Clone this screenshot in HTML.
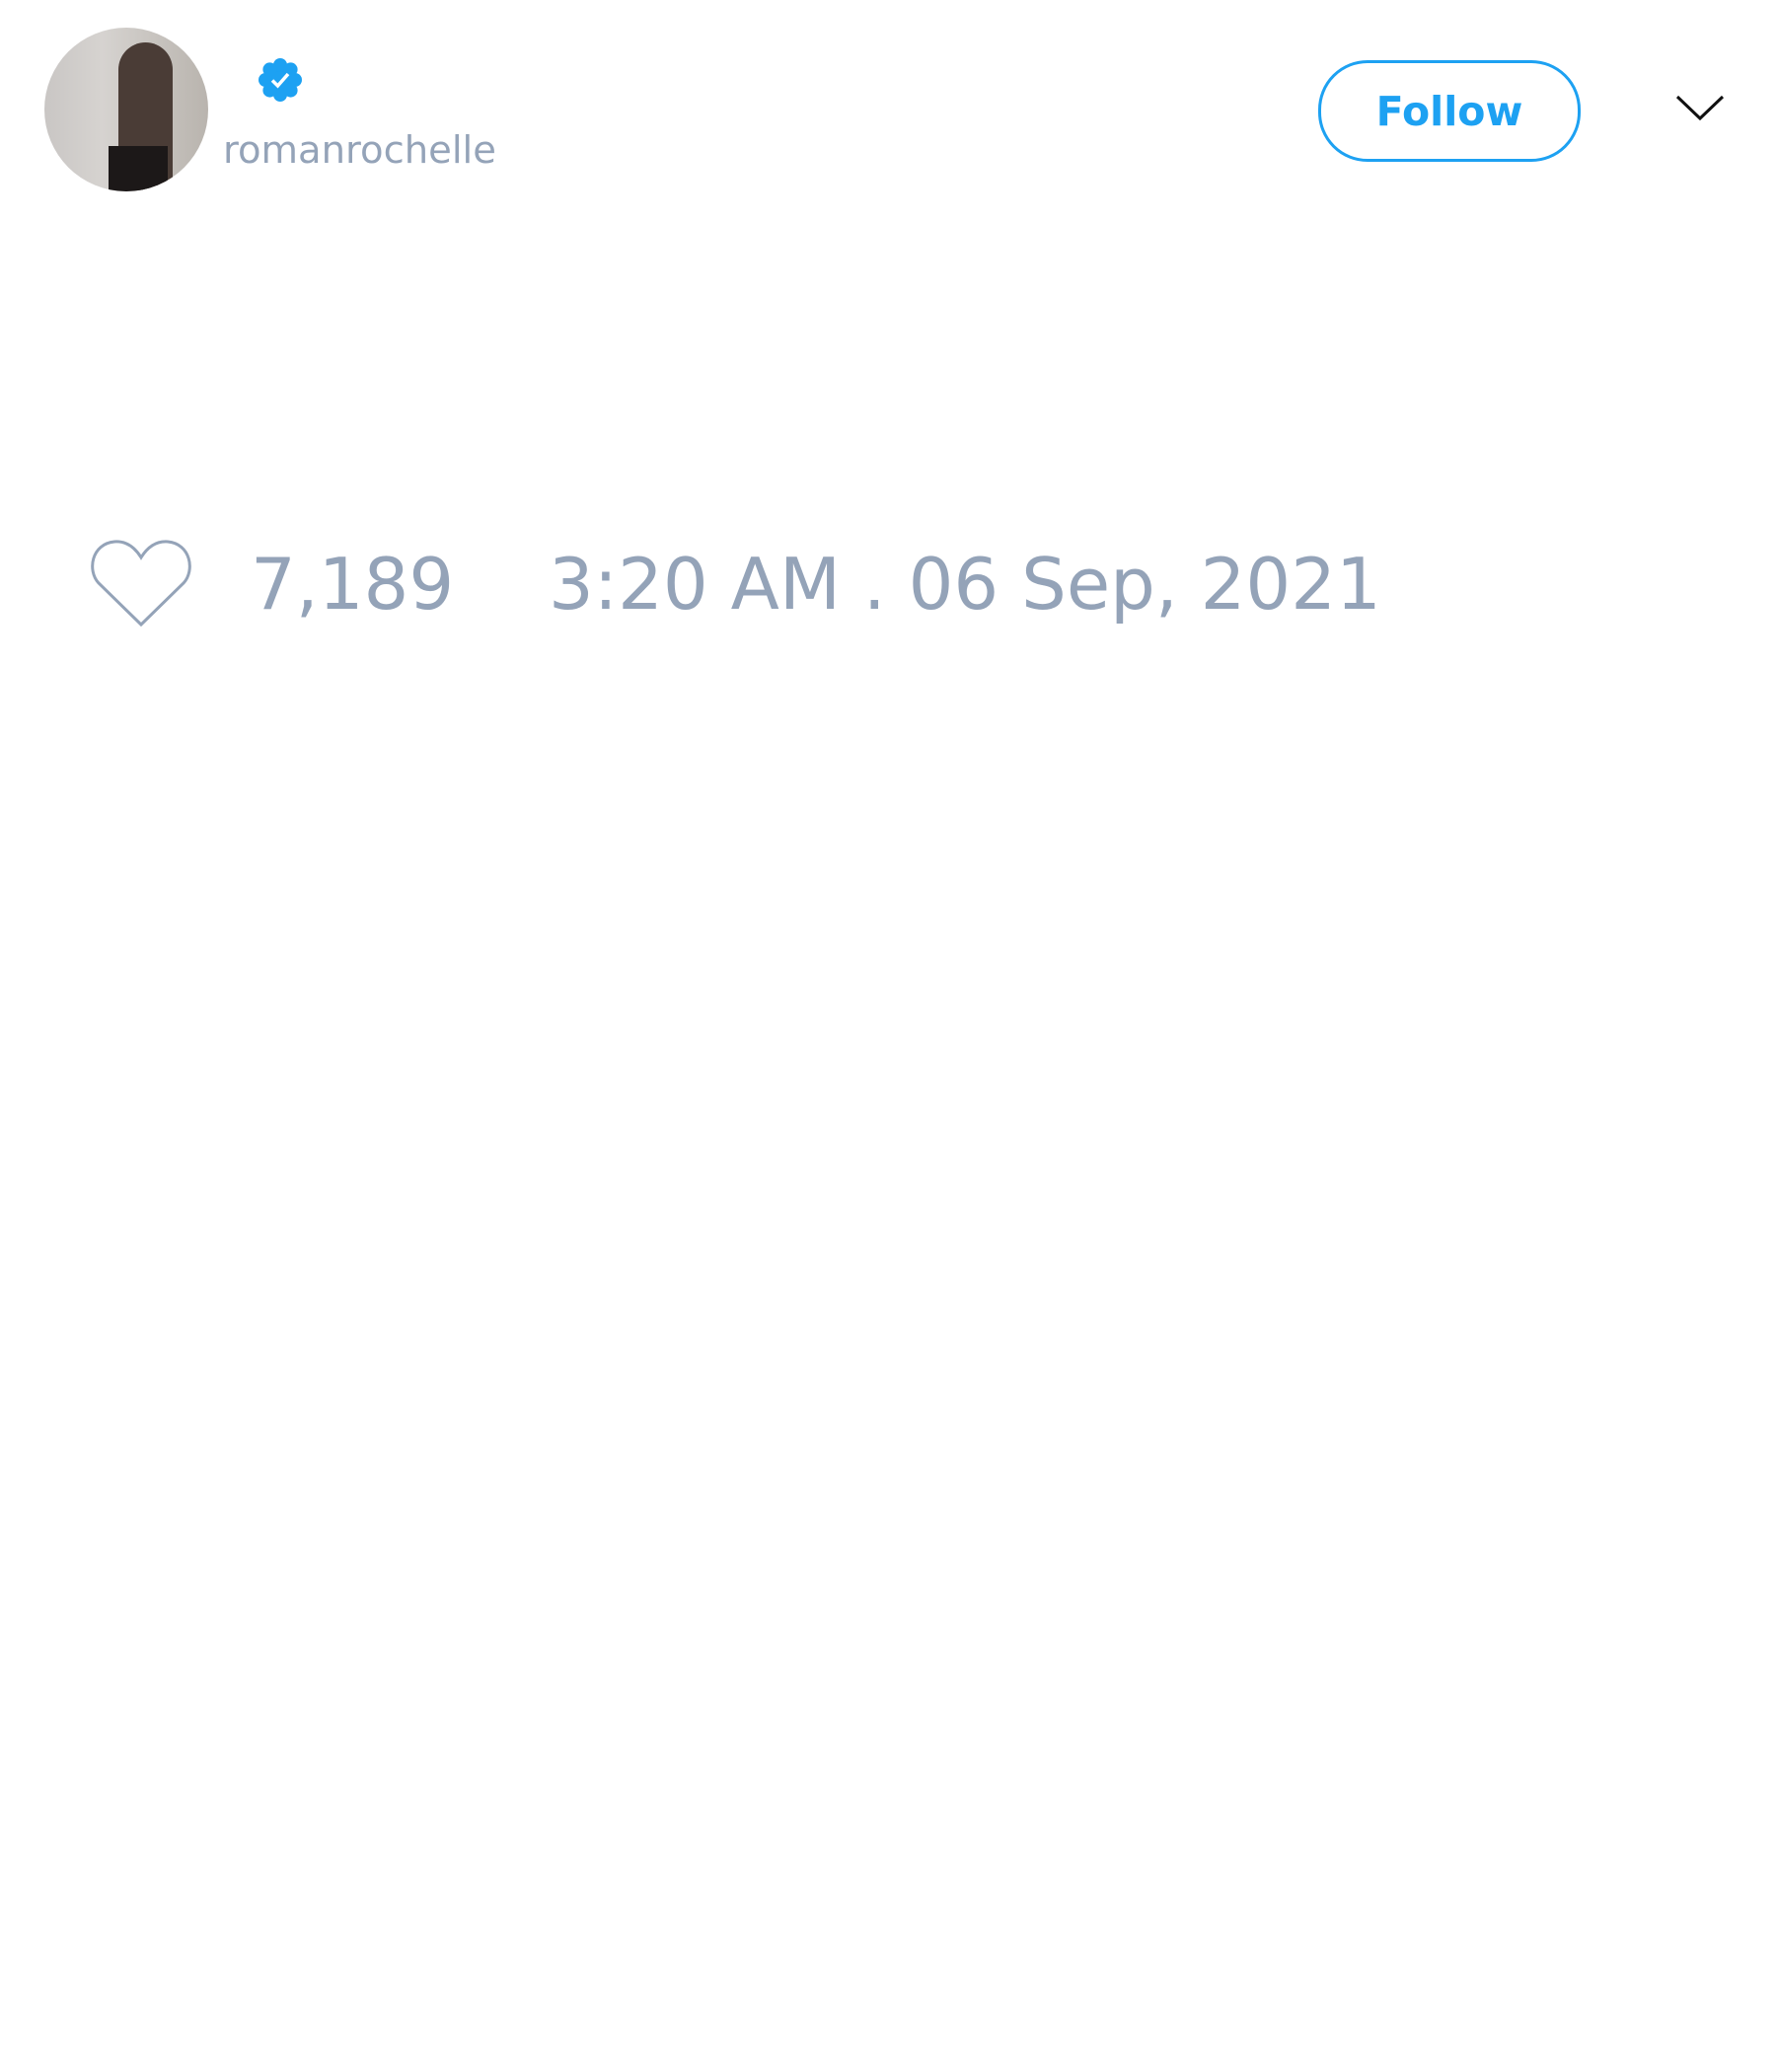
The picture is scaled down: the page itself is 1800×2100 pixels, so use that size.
<!DOCTYPE html>
<html><head><style>
body{margin:0;width:1800px;height:2100px;background:#fff;font-family:"DejaVu Sans","Liberation Sans",sans-serif;position:relative;overflow:hidden}
.av{position:absolute;left:45px;top:28px;width:166px;height:166px;border-radius:50%;background:linear-gradient(90deg,#c9c6c4 0%,#d6d3d0 35%,#b9b4ae 100%);overflow:hidden}
.fig{position:absolute;left:75px;top:15px;width:55px;height:150px;background:#4a3c36;border-radius:28px 28px 5px 5px}
.fig2{position:absolute;left:65px;top:120px;width:60px;height:50px;background:#1c1818}
.u{position:absolute;left:226px;top:130px;font-size:38.5px;color:#94a3b8}
.btn{position:absolute;left:1336px;top:61px;width:260px;height:97px;border:3px solid #1da1f2;border-radius:50px;color:#1da1f2;font-weight:bold;font-size:41px;display:flex;align-items:center;justify-content:center}
.big{position:absolute;top:550px;font-size:72px;color:#94a3b8}
</style></head><body>
<div class="av"><div class="fig"></div><div class="fig2"></div></div>
<svg style="position:absolute;left:261px;top:58px" width="46" height="46" viewBox="0 0 46 46"><g fill="#1da1f2"><circle cx="23" cy="23" r="17"/><circle cx="23" cy="8" r="7"/><circle cx="23" cy="38" r="7"/><circle cx="8" cy="23" r="7"/><circle cx="38" cy="23" r="7"/><circle cx="12.4" cy="12.4" r="7"/><circle cx="33.6" cy="12.4" r="7"/><circle cx="12.4" cy="33.6" r="7"/><circle cx="33.6" cy="33.6" r="7"/></g><path d="M15 23.5l5.5 5.5L31 17" fill="none" stroke="#fff" stroke-width="3.5"/></svg>
<div class="u">romanrochelle</div>
<div class="btn">Follow</div>
<svg style="position:absolute;left:1698px;top:94px" width="50" height="32" viewBox="0 0 50 32"><path d="M2 4l23 22 23-22" fill="none" stroke="#111" stroke-width="3"/></svg>
<svg style="position:absolute;left:90px;top:545px" width="106" height="92" viewBox="0 0 106 92"><path d="M53 88L10 46C-2 33 3 6 26 4 40 3 48 12 53 20 58 12 66 3 80 4 103 6 108 33 96 46Z" fill="none" stroke="#94a3b8" stroke-width="3"/></svg>
<div class="big" style="left:254px">7,189</div>
<div class="big" style="left:556px">3:20 AM . 06 Sep, 2021</div>
</body></html>
